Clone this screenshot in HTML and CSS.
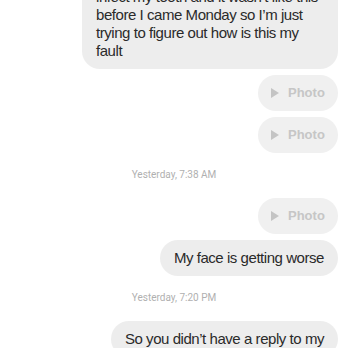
FILE: index.html
```html
<!DOCTYPE html>
<html>
<head>
<meta charset="utf-8">
<link rel="stylesheet" href="styles.css">
</head>
<body>
<div class="thread">
  <div class="row">
    <div class="bubble">infect my tooth and it wasn’t like this before I came Monday so I’m just trying to figure out how is this my fault</div>
  </div>
  <div class="row gap">
    <div class="bubble photo"><svg class="play" width="8" height="10" viewBox="0 0 8 10"><path d="M0 0 L8 5 L0 10 Z" fill="#c4c4c4"/></svg><span>Photo</span></div>
  </div>
  <div class="row gap">
    <div class="bubble photo"><svg class="play" width="8" height="10" viewBox="0 0 8 10"><path d="M0 0 L8 5 L0 10 Z" fill="#c4c4c4"/></svg><span>Photo</span></div>
  </div>
  <div class="stamp">Yesterday, 7:38 AM</div>
  <div class="row">
    <div class="bubble photo"><svg class="play" width="8" height="10" viewBox="0 0 8 10"><path d="M0 0 L8 5 L0 10 Z" fill="#c4c4c4"/></svg><span>Photo</span></div>
  </div>
  <div class="row gap">
    <div class="bubble">My face is getting worse</div>
  </div>
  <div class="stamp">Yesterday, 7:20 PM</div>
  <div class="row">
    <div class="bubble">So you didn’t have a reply to my</div>
  </div>
</div>
</body>
</html>
```
FILE: styles.css
```css
html, body {
  margin: 0;
  padding: 0;
  background: #ffffff;
  overflow: hidden;
}
body {
  font-family: "Liberation Sans", Arial, sans-serif;
  color: #2a2a2a;
}
.thread {
  display: flex;
  flex-direction: column;
  margin-top: -21px;
}
.row {
  display: flex;
  justify-content: flex-end;
  padding-right: 10px;
}
.row.gap {
  margin-top: 6px;
}
.bubble {
  background: #ededed;
  border-radius: 18px;
  padding: 9px 14px;
  font-size: 15px;
  letter-spacing: -0.45px;
  line-height: 18px;
  max-width: 228px;
}
.photo {
  width: 80px;
  box-sizing: border-box;
  padding: 9px 13px;
  display: flex;
  align-items: center;
  gap: 9px;
  background: #f0f0f0;
  color: #c6c6c6;
  font-size: 13px;
  letter-spacing: 0;
  font-weight: bold;
}
.play {
  display: block;
  flex: none;
}
.stamp {
  text-align: center;
  font-family: Roboto, "Liberation Sans", Arial, sans-serif;
  font-size: 10px;
  line-height: 12px;
  color: #b0b0b0;
  margin: 16px 0 17px;
}
```
